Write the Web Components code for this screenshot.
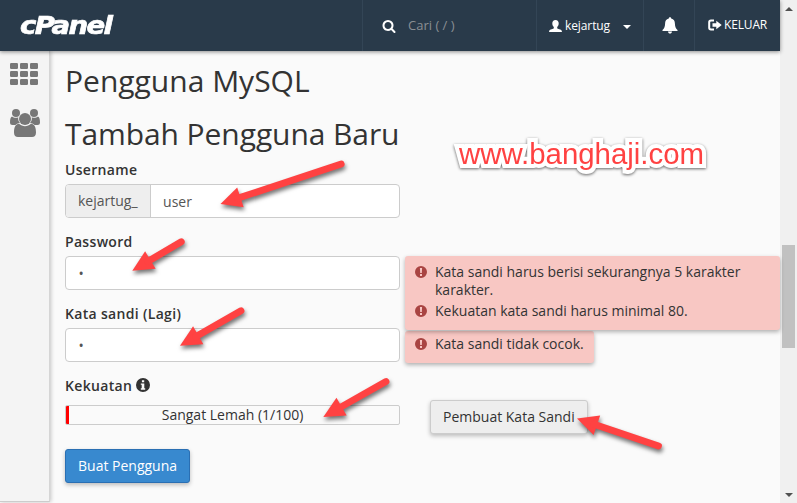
<!DOCTYPE html>
<html lang="id"><head><meta charset="utf-8"><title>cPanel</title>
<style>
html,body{margin:0;height:100%;overflow:hidden}
body{font-family:"Open Sans",sans-serif;font-size:14px;line-height:20px;color:#333;background:#fafafa}
</style></head><body>
<cp-app></cp-app>
<script>
const define=(name,html)=>customElements.define(name,class extends HTMLElement{
  constructor(){super();this.attachShadow({mode:'open'}).innerHTML=html}
});

const ICONS={
  search:['0 0 1792 1792','<path d="M1216 832q0-185-131.500-316.500t-316.500-131.500-316.500 131.500-131.500 316.500 131.500 316.500 316.500 131.500 316.500-131.500 131.500-316.500zm512 832q0 52-38 90t-90 38q-54 0-90-38l-343-342q-179 124-399 124-143 0-273.500-55.500t-225-150-150-225-55.500-273.500 55.500-273.500 150-225 225-150 273.500-55.500 273.500 55.500 225 150 150 225 55.500 273.500q0 220-124 399l343 343q37 37 37 90z"/>'],
  user:['0 0 13 12','<path d="M6.500 0C8.600 0 9.700 1.300 9.700 3.300 9.700 4.900 9.100 6.300 8.200 7.100V8.200C8.300 8.900 12.300 9.300 12.700 10.700L13 12H0L.3 10.700C.7 9.300 4.700 8.900 4.800 8.200V7.100C3.900 6.300 3.300 4.900 3.300 3.300 3.300 1.300 4.400 0 6.500 0Z"/>'],
  bell:['0 0 16 17','<path d="M8 .3C8.700.3 9.200.8 9.200 1.500 11.800 2.100 12.900 4 12.900 6.500 13 9.500 13.600 11.500 15.500 13V14H.5V13C2.400 11.500 3 9.500 3.100 6.500 3.100 4 4.200 2.100 6.800 1.500 6.800.8 7.300.3 8 .3ZM6 14.500H10C10 15.800 9.100 16.600 8 16.600S6 15.800 6 14.500Z"/>'],
  out:['0 0 14 12','<path fill="none" stroke="currentColor" stroke-width="2" d="M6 1.500H3C1.900 1.500 1.200 2.200 1.200 3.200V8.800C1.200 9.800 1.900 10.500 3 10.500H6"/><path d="M4.500 4.300H8.300V1.700L13.700 6 8.300 10.300V7.700H4.500Z"/>'],
  grid:['0 0 28 22','<rect width="8" height="6" rx="1.200"/><rect x="10" width="8" height="6" rx="1.200"/><rect x="20" width="8" height="6" rx="1.200"/><rect y="8" width="8" height="6" rx="1.200"/><rect x="10" y="8" width="8" height="6" rx="1.200"/><rect x="20" y="8" width="8" height="6" rx="1.200"/><rect y="16" width="8" height="6" rx="1.200"/><rect x="10" y="16" width="8" height="6" rx="1.200"/><rect x="20" y="16" width="8" height="6" rx="1.200"/>'],
  users:['0 0 30 28','<circle cx="6" cy="4" r="4"/><circle cx="24" cy="4" r="4"/><path d="M2 7.500C3.500 9 6.500 9.200 8.200 8.300 8 11 8.500 12.500 10 14 7.500 14 6.500 15 5.500 16H2.500C1 16 0 15.200 0 13.500 0 10.500.6 8 2 7.500ZM28 7.500C26.500 9 23.500 9.200 21.800 8.300 22 11 21.500 12.500 20 14 22.500 14 23.500 15 24.500 16H27.500C29 16 30 15.200 30 13.500 30 10.500 29.400 8 28 7.500Z"/><circle cx="15" cy="10" r="6"/><path d="M9 14.800C12.500 18 17.500 18 21 14.800 24.500 14.800 26 18.500 26 23.500 26 26.500 24.500 28 22 28H8C5.500 28 4 26.500 4 23.500 4 18.500 5.500 14.800 9 14.800Z"/>'],
  warn:['0 0 12 12','<path fill-rule="evenodd" d="M6 0A6 6 0 1 1 6 12 6 6 0 0 1 6 0ZM4.900 2L5.200 7H6.800L7.100 2ZM5 8V10H7V8Z"/>'],
  info:['0 0 14 14','<path fill-rule="evenodd" d="M7 0A7 7 0 1 1 7 14 7 7 0 0 1 7 0ZM5.900 2.200V4.300H8.200V2.200ZM4.800 5.500V6.800H5.700V10.300H4.800V11.700H9.200V10.300H8.300V5.500Z"/>']
};
customElements.define('cp-icon',class extends HTMLElement{
  constructor(){super();this.attachShadow({mode:'open'})}
  connectedCallback(){
    const [box,body]=ICONS[this.getAttribute('name')];
    this.shadowRoot.innerHTML=`<style>:host{display:inline-block;flex:none}svg{display:block;width:100%;height:100%;fill:currentColor}</style><svg viewBox="${box}" preserveAspectRatio="none">${body}</svg>`;
  }
});

define('cp-header',`<style>
:host{display:grid;grid-template-columns:362px 174px 107px 51px 1fr;height:51px;background:#293a4a;color:#fff;box-shadow:0 1px 4px rgba(0,0,0,.45);position:relative;z-index:2;font-size:12px}
div{display:flex;align-items:center;box-sizing:border-box}
div+div{border-left:1px solid #334556}
.logo{padding:0 0 1px 20px}
.logo span{font:italic 700 25.500px/30px "DejaVu Sans",sans-serif;letter-spacing:-1.500px;transform:scaleX(1.080);transform-origin:0 50%;-webkit-text-stroke:.7px #fff}
.s{padding-left:19px;color:#8a8f94;font-size:13px}
.s cp-icon{color:#fff;width:14px;height:14px;margin-right:12px}
.s span{margin-top:-1px}
.u{padding-left:12px}.u cp-icon{width:13px;height:12px;margin-right:3px}
.u span{letter-spacing:-.1px}
i{border:4px solid transparent;border-top-color:#fff;border-bottom:0;margin-left:13px;margin-top:3px}
.b{padding-left:18px}.b cp-icon{width:16px;height:17px}
.o{padding:0 0 2px 13px}.o cp-icon{width:14px;height:12px;margin-right:2px}
.o span{letter-spacing:-.15px}
</style>
<div class="logo"><span>cPanel</span></div>
<div class="s"><cp-icon name="search"></cp-icon><span>Cari ( / )</span></div>
<div class="u"><cp-icon name="user"></cp-icon><span>kejartug</span><i></i></div>
<div class="b"><cp-icon name="bell"></cp-icon></div>
<div class="o"><cp-icon name="out"></cp-icon><span>KELUAR</span></div>`);

define('cp-sidebar',`<style>
:host{display:flex;flex-direction:column;box-sizing:border-box;width:50px;height:451px;padding:12px 0 0 10px;gap:24px;background:#f4f4f4;color:#777;border-right:1px solid #d5d5d5;border-bottom:1px solid #ccc;box-shadow:1px 0 4px rgba(0,0,0,.22)}
.g{width:28px;height:22px}.p{width:30px;height:28px}
</style><cp-icon class="g" name="grid"></cp-icon><cp-icon class="p" name="users"></cp-icon>`);

define('cp-field',`<style>
:host{display:block;position:relative;height:72px}
label{display:block;font-weight:600;letter-spacing:.32px;height:24px}
.box{display:flex;box-sizing:border-box;width:335px;height:34px;border:1px solid #ccc;border-radius:4px;background:#fff;color:#555;line-height:33px;overflow:hidden}
::slotted([slot=prefix]){background:#eee;border-right:1px solid #ccc;padding:0 12px;line-height:31px}
.v{padding-left:12.500px}
</style><label><slot name="label"></slot></label><div class="box"><slot name="prefix"></slot><span class="v"><slot></slot></span></div><slot name="error"></slot>`);

define('cp-errors',`<style>
:host{display:flex;flex-direction:column;gap:3px;position:absolute;left:340px;top:24px;z-index:1;box-sizing:border-box;width:max-content;max-width:375px;padding:7px 10px 10px;background:#f8c7c3;border-radius:3px;box-shadow:0 2px 4px rgba(0,0,0,.3);line-height:18px}
</style><slot></slot>`);
define('cp-error',`<style>
:host{display:flex;gap:8px}cp-icon{width:12px;height:12px;color:#a94442;margin-top:3px}
</style><cp-icon name="warn"></cp-icon><span><slot></slot></span>`);
define('cp-button',`<style>
:host{display:inline-block;box-sizing:border-box;height:34px;line-height:32px;border:1px solid #ccc;border-radius:3px;background:#eee;padding:0 12px;box-shadow:0 2px 4px rgba(0,0,0,.25);white-space:nowrap}
:host([primary]){background:#3889cf;border-color:#2a6fb3;color:#fff}
</style><slot></slot>`);
define('cp-strength',`<style>
:host{display:grid;grid-template-columns:335px auto;column-gap:30px;height:73px;grid-template-rows:24px 49px}
label{font-weight:600;letter-spacing:.32px;display:flex;align-items:flex-start;grid-column:1/3}
label cp-icon{width:14px;height:14px;margin:2px 0 0 4px}
.bar{box-sizing:border-box;width:335px;height:20px;border:1px solid #ccc;border-radius:2px;margin-top:5px;text-align:center;line-height:18px;background:linear-gradient(90deg,red 3px,transparent 3px)}
cp-button{justify-self:start}
</style><label>Kekuatan <cp-icon name="info"></cp-icon></label><div class="bar">Sangat Lemah (1/100)</div><cp-button>Pembuat Kata Sandi</cp-button>`);

define('cp-form',`<style>
:host{display:block;padding:13px 0 0 15px}
h1{margin:0 0 20px;font-weight:400;font-size:30px;line-height:33px;color:#333}
h1+h1{margin-bottom:10px;letter-spacing:-.08px}
.e2{z-index:0;padding:4px 10px 10px;top:27px}
</style>
<h1 class="a">Pengguna MySQL</h1><h1 class="b">Tambah Pengguna Baru</h1>
<cp-field><span slot="label">Username</span><span slot="prefix">kejartug_</span>user</cp-field>
<cp-field><span slot="label">Password</span>•<cp-errors slot="error"><cp-error>Kata sandi harus berisi sekurangnya 5 karakter karakter.</cp-error><cp-error>Kekuatan kata sandi harus minimal 80.</cp-error></cp-errors></cp-field>
<cp-field><span slot="label">Kata sandi (Lagi)</span>•<cp-errors slot="error" class="e2"><cp-error>Kata sandi tidak cocok.</cp-error></cp-errors></cp-field>
<cp-strength></cp-strength>
<cp-button primary>Buat Pengguna</cp-button>`);

define('cp-scrollbar',`<style>
:host{display:flex;flex-direction:column;align-items:center;box-sizing:border-box;background:#f0f0f0;height:503px;padding:7px 0 6px}
i{border:4px solid transparent}.u{border-top:0;border-bottom-color:#505050}.d{border-bottom:0;border-top-color:#505050;margin-top:auto}
b{width:13px;height:103px;margin-top:234px;background:#c1c1c1}
</style><i class="u"></i><b></b><i class="d"></i>`);

const ARROWS=[[220.500,204,341.200,164],[132.300,270.700,181.300,241.700],[180,345.700,241,310.700],[323.300,417,386,381.500],[577,418.500,658.500,446]];
define('cp-notes',`<style>
:host{position:absolute;inset:0;z-index:5;pointer-events:none}
svg{display:block;filter:drop-shadow(1.500px 3.500px 2px rgba(0,0,0,.55))}
.mark{position:absolute;left:459px;top:137px;font:29.400px/33px "Liberation Sans",Arial,sans-serif;color:#ff4242;white-space:nowrap;-webkit-text-stroke:8px #fff;stroke-linejoin:round;paint-order:stroke fill;filter:drop-shadow(0 1px 1.500px rgba(0,0,0,.6))}
</style><svg width="797" height="503" fill="#ff4242" stroke="#ff4242">${ARROWS.map(([x,y,a,b])=>{
  const l=Math.hypot(a-x,b-y),r=Math.atan2(b-y,a-x)*180/Math.PI;
  return `<g transform="translate(${x} ${y}) rotate(${r})"><path stroke="none" d="M0 0L21-10.300V10.300Z"/><path d="M18 0H${l}" stroke-width="6.800" stroke-linecap="round"/></g>`}).join('')}</svg>
<span class="mark">www.banghaji.com</span>`);

define('cp-app',`<style>
:host{display:grid;grid-template-columns:780px 17px;height:503px;position:relative;overflow:hidden}
.body{display:grid;grid-template-columns:50px 1fr}
</style><div><cp-header></cp-header><div class="body"><cp-sidebar></cp-sidebar><cp-form></cp-form></div></div><cp-scrollbar></cp-scrollbar><cp-notes></cp-notes>`);
</script></body></html>
